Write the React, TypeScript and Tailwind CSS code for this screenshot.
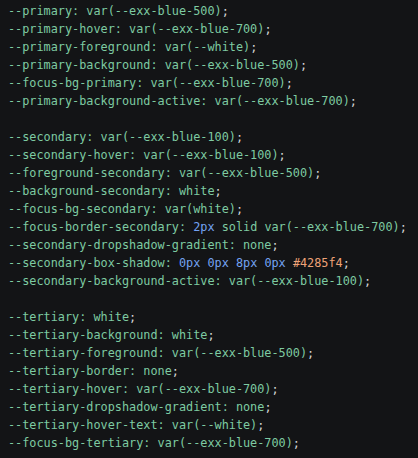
type Tok = { t: string; c?: "num" | "hex" | "semi" };

const lines: Tok[][] = [
  [{ t: "--primary: var(--exx-blue-500)" }, { t: ";", c: "semi" }],
  [{ t: "--primary-hover: var(--exx-blue-700)" }, { t: ";", c: "semi" }],
  [{ t: "--primary-foreground: var(--white)" }, { t: ";", c: "semi" }],
  [{ t: "--primary-background: var(--exx-blue-500)" }, { t: ";", c: "semi" }],
  [{ t: "--focus-bg-primary: var(--exx-blue-700)" }, { t: ";", c: "semi" }],
  [{ t: "--primary-background-active: var(--exx-blue-700)" }, { t: ";", c: "semi" }],
  [],
  [{ t: "--secondary: var(--exx-blue-100)" }, { t: ";", c: "semi" }],
  [{ t: "--secondary-hover: var(--exx-blue-100)" }, { t: ";", c: "semi" }],
  [{ t: "--foreground-secondary: var(--exx-blue-500)" }, { t: ";", c: "semi" }],
  [{ t: "--background-secondary: white" }, { t: ";", c: "semi" }],
  [{ t: "--focus-bg-secondary: var(white)" }, { t: ";", c: "semi" }],
  [
    { t: "--focus-border-secondary: " },
    { t: "2px", c: "num" },
    { t: " solid var(--exx-blue-700)" },
    { t: ";", c: "semi" },
  ],
  [{ t: "--secondary-dropshadow-gradient: none" }, { t: ";", c: "semi" }],
  [
    { t: "--secondary-box-shadow: " },
    { t: "0px 0px 8px 0px", c: "num" },
    { t: " " },
    { t: "#4285f4", c: "hex" },
    { t: ";", c: "semi" },
  ],
  [{ t: "--secondary-background-active: var(--exx-blue-100)" }, { t: ";", c: "semi" }],
  [],
  [{ t: "--tertiary: white" }, { t: ";", c: "semi" }],
  [{ t: "--tertiary-background: white" }, { t: ";", c: "semi" }],
  [{ t: "--tertiary-foreground: var(--exx-blue-500)" }, { t: ";", c: "semi" }],
  [{ t: "--tertiary-border: none" }, { t: ";", c: "semi" }],
  [{ t: "--tertiary-hover: var(--exx-blue-700)" }, { t: ";", c: "semi" }],
  [{ t: "--tertiary-dropshadow-gradient: none" }, { t: ";", c: "semi" }],
  [{ t: "--tertiary-hover-text: var(--white)" }, { t: ";", c: "semi" }],
  [{ t: "--focus-bg-tertiary: var(--exx-blue-700)" }, { t: ";", c: "semi" }],
];

function Token({ tok }: { tok: Tok }) {
  if (tok.c === "num") return <span className="text-[#74a3f2]">{tok.t}</span>;
  if (tok.c === "hex") return <span className="text-[#eea277]">{tok.t}</span>;
  if (tok.c === "semi") return <span className="text-[#d4d4d4]">{tok.t}</span>;
  return <span>{tok.t}</span>;
}

export default function App() {
  return (
    <div className="w-[418px] h-[458px] bg-[#131416] overflow-hidden">
      {/* Code block */}
      <pre className="pt-[2px] pl-2 font-['DejaVu_Sans_Mono',monospace] text-[11.83px] leading-[18px] text-[#7ecba2] whitespace-pre">
        {lines.map((line, i) => (
          <div key={i} className="h-[18px]">
            {line.map((tok, j) => (
              <Token key={j} tok={tok} />
            ))}
          </div>
        ))}
      </pre>
    </div>
  );
}
